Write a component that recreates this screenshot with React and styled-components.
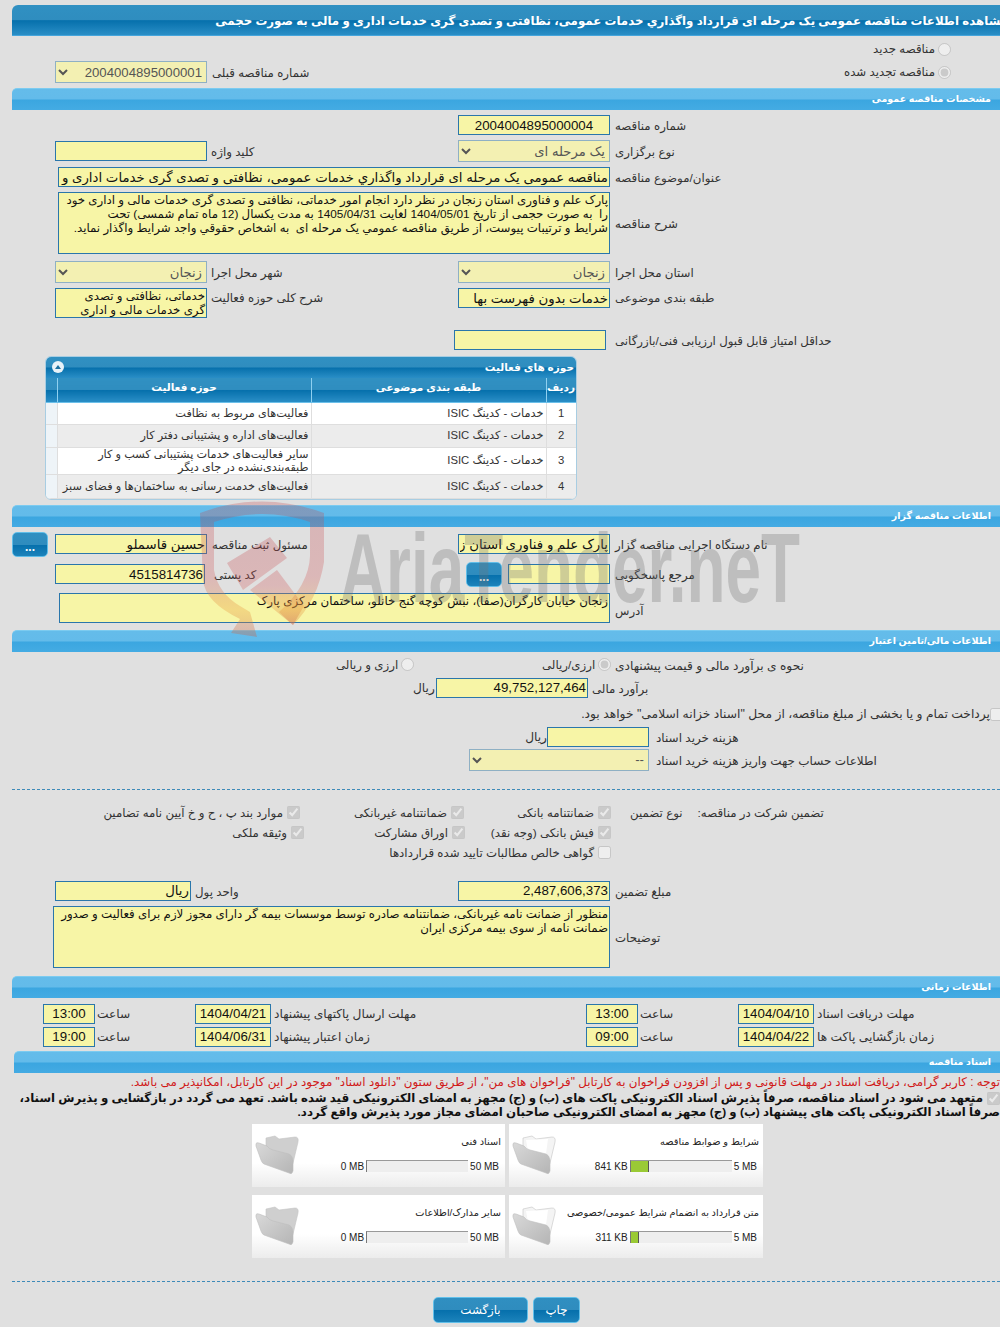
import React from "react";
import styled, { createGlobalStyle } from "styled-components";

const FONT = '"Liberation Sans", "DejaVu Sans", sans-serif';

const GlobalStyle = createGlobalStyle`
  html, body { margin: 0; padding: 0; background: #e0e0e0; }
  body { font-family: ${FONT}; font-size: 11.8px; color: #222; }
`;

const Page = styled.div`
  position: relative;
  width: 1000px;
  height: 1327px;
  overflow: hidden;
  padding-top: 5px;
  box-sizing: border-box;
`;

// Title strip
const TitleBar = styled.div`
  margin-left: 12px;
  margin-right: -8px;
  height: 31px;
  line-height: 32px;
  direction: rtl;
  white-space: nowrap;
  overflow: hidden;
  border-top-left-radius: 6px;
  background: linear-gradient(#3090c2 0, #2f8dbf 50%, #0670ac 52%, #2a8ec6 100%);
  border-bottom: 1px solid #45a5dc;
  box-sizing: border-box;
  color: #fff;
  font-weight: bold;
  font-size: 11.8px;
`;

const SectionBar = styled.div`
  margin-top: ${(p) => p.$mt ?? 5}px;
  margin-left: ${(p) => p.$ml ?? 12}px;
  height: 22px;
  line-height: 20px;
  direction: rtl;
  padding-right: 9px;
  border-top-left-radius: 5px;
  box-sizing: border-box;
  background: linear-gradient(#64bcea 0, #63bbea 48%, #3ba6e0 52%, #44abe3 100%);
  border-top: 1px solid #7ccbf0;
  color: #fff;
  font-weight: bold;
  font-size: 9.5px;
  white-space: nowrap;
`;

// Form rows: [left input][left label][right input][right label]
const FormRow = styled.div`
  display: grid;
  grid-template-columns: 152px 251px 152px 1fr;
  margin-top: ${(p) => p.$mt ?? 5}px;
  padding-left: 55px;
  align-items: center;
`;

const WideRow = styled.div`
  display: flex;
  margin-top: ${(p) => p.$mt ?? 5}px;
  align-items: center;
`;

const Label = styled.label`
  direction: rtl;
  text-align: left;
  font-size: ${(p) => p.$size ?? 11.8}px;
  padding-left: ${(p) => p.$pl ?? 5}px;
  padding-top: 2px;
  white-space: nowrap;
  color: #333;
  align-self: ${(p) => p.$self ?? "center"};
  line-height: ${(p) => (p.$self ? "16px" : "14px")};
`;

const Field = styled.input.attrs({ readOnly: true })`
  direction: rtl;
  display: block;
  width: ${(p) => p.$w ?? 152}px;
  height: 20px;
  margin-left: ${(p) => p.$ml ?? 0}px;
  padding: 0 1px;
  box-sizing: border-box;
  background: #f7f5a6;
  border: 1px solid #2a76ab;
  border-radius: 0;
  outline: none;
  font-family: ${FONT};
  font-size: 13.3px;
  color: #111;
  text-align: ${(p) => p.$align ?? "right"};
`;

const Area = styled.textarea.attrs({ readOnly: true })`
  direction: rtl;
  display: block;
  width: ${(p) => p.$w ?? 152}px;
  height: ${(p) => p.$h}px;
  margin-left: ${(p) => p.$ml ?? 0}px;
  padding: 0 1px;
  box-sizing: border-box;
  background: #f7f5a6;
  border: 1px solid #2a76ab;
  border-radius: 0;
  outline: none;
  resize: none;
  overflow: hidden;
  font-family: ${FONT};
  font-size: 11.8px;
  line-height: 14px;
  color: #111;
`;

const Select = styled.select.attrs({ disabled: true })`
  direction: rtl;
  display: block;
  width: ${(p) => p.$w ?? 152}px;
  height: 22px;
  box-sizing: border-box;
  background: #f3f0b2;
  border: 1px solid #8fb0c4;
  border-radius: 0;
  opacity: 1;
  font-family: ${FONT};
  font-size: 13.2px;
  color: #555;
`;

const DotsButton = styled.button`
  width: 36px;
  height: 25px;
  padding: 6px 0 0;
  border: 1px solid #5fbde8;
  border-radius: 5px;
  background: linear-gradient(#308fc1 0, #2f8cbe 50%, #0670ac 52%, #1c83bb 100%);
  color: #fff;
  font-size: 12px;
  font-weight: bold;
  line-height: 14px;
  font-family: ${FONT};
`;

const Radio = styled.input.attrs({ type: "radio", disabled: true })`
  width: 13px;
  height: 13px;
  margin: 0 0 0 3px;
  flex: none;
`;

const RadioLabel = styled.label`
  direction: rtl;
  display: flex;
  align-items: center;
  font-size: 11.8px;
  line-height: 14px;
  color: #333;
  white-space: nowrap;
`;

const RadioStack = styled.div`
  display: flex;
  direction: rtl;
  padding-right: 49px;
  margin-top: 6px;
  height: 14px;
  align-items: center;
`;

const TopRow = styled.div`
  display: flex;
  justify-content: space-between;
  align-items: center;
  margin-top: 5px;
  padding: 0 49px 0 55px;
`;

const Prev = styled.div`
  display: flex;
  align-items: center;
`;

// Activity panel
const Panel = styled.div`
  margin: 6px 0 0 45px;
  width: 532px;
  border: 1px solid #a8cde2;
  border-radius: 6px;
  overflow: hidden;
  background: #fff;
  box-sizing: border-box;
`;

const PanelTitle = styled.div`
  direction: rtl;
  display: flex;
  justify-content: space-between;
  align-items: center;
  height: 21px;
  padding: 0 2px 2px 6px;
  box-sizing: border-box;
  background: linear-gradient(#3090c2 0, #2f8dbf 48%, #0670ac 52%, #2a8ec6 100%);
  color: #fff;
  font-weight: bold;
  font-size: 10.5px;
`;

const Collapse = styled.span`
  width: 12px;
  height: 12px;
  border-radius: 50%;
  background: #e8f2f8;
  display: flex;
  align-items: center;
  justify-content: center;
  &::before {
    content: "";
    border-left: 3.5px solid transparent;
    border-right: 3.5px solid transparent;
    border-bottom: 4px solid #1b6f9f;
  }
`;

const Table = styled.table`
  direction: rtl;
  width: 100%;
  border-collapse: collapse;
  table-layout: fixed;
  font-size: 11.3px;
`;

const Th = styled.th`
  box-sizing: border-box;
  height: 24px;
  padding: 0 1px 5px;
  background: linear-gradient(#3090c2 0, #2f8dbf 48%, #0670ac 52%, #2a8ec6 100%);
  border-left: 1px solid #8fd0f0;
  border-bottom: 1px solid #6cc0ea;
  color: #fff;
  font-size: 10.5px;
  width: ${(p) => p.$w ?? "auto"};
  &:last-child { border-left: 0; }
`;

const Td = styled.td`
  box-sizing: border-box;
  height: ${(p) => p.$h ?? 22}px;
  padding: 0 2px;
  line-height: 13px;
  text-align: ${(p) => p.$align ?? "right"};
  border-left: 1px solid #dedede;
  border-bottom: 1px solid #dedede;
  color: #333;
  background: ${(p) => (p.$alt ? "#ececec" : "#fff")};
  &:last-child { background: #eef4f8; border-left: 0; padding: 0; }
`;

// Payment rows
const PayRow = styled.div`
  display: flex;
  align-items: center;
  margin-top: ${(p) => p.$mt ?? 4}px;
  padding-left: ${(p) => p.$pl ?? 0}px;
`;

const Cell = styled.div`
  width: ${(p) => p.$w}px;
  flex: none;
  direction: rtl;
  text-align: left;
  font-size: 12.2px;
  line-height: 14px;
  color: #333;
  white-space: nowrap;
  padding-left: ${(p) => p.$pl ?? 0}px;
  box-sizing: border-box;
`;

const Check = styled.input.attrs({ type: "checkbox", disabled: true })`
  width: 13px;
  height: 13px;
  margin: 0 0 0 4px;
  flex: none;
`;

const NoticeCheck = styled(Check)`
  vertical-align: middle;
  margin: ${(p) => p.$margin ?? "0 0 0 4px"};
`;

const Dashed = styled.div`
  margin-top: ${(p) => p.$mt}px;
  margin-left: 12px;
  border-top: 1px dashed #3e8ab8;
`;

const GuaranteeRow = styled.div`
  display: grid;
  grid-template-columns: 204px 161px 146px auto;
  padding-left: 100px;
  margin-top: ${(p) => p.$mt ?? 6}px;
  height: 14px;
  align-items: center;
`;

const CheckCell = styled.label`
  direction: rtl;
  display: flex;
  align-items: center;
  white-space: nowrap;
  font-size: 11.8px;
  color: #333;
  padding-right: ${(p) => p.$pr ?? 0}px;
  grid-column: ${(p) => p.$span ?? "auto"};
`;

const GuaranteeHead = styled.div`
  display: flex;
  gap: 15px;
  padding-left: 19px;
  direction: ltr;
  font-size: 11.8px;
  color: #333;
  white-space: nowrap;
  span { direction: rtl; }
`;

const TimeRow = styled.div`
  display: flex;
  align-items: center;
  padding-left: 43px;
  margin-top: ${(p) => p.$mt ?? 3}px;
`;

const Notice = styled.div`
  direction: rtl;
  white-space: nowrap;
  font-size: ${(p) => p.$size ?? 11.8}px;
  line-height: 14px;
  font-weight: ${(p) => (p.$bold ? "bold" : "normal")};
  color: ${(p) => p.$color ?? "#111"};
  margin-top: ${(p) => p.$mt ?? 0}px;
`;

// Document cards
const CardGrid = styled.div`
  display: grid;
  grid-template-columns: 253px 254px;
  gap: 8px 4px;
  padding-left: 252px;
  margin-top: 5px;
`;

const Card = styled.div`
  height: 63px;
  display: flex;
  box-sizing: border-box;
  padding: 11px 4px 0 3px;
  background: linear-gradient(#fff 0, #fff 62%, #ececec 100%);
`;

const CardBody = styled.div`
  flex: 1;
  direction: rtl;
  color: #222;
  margin-top: -2px;
`;

const CardTitle = styled.div`
  font-size: 9.8px;
  height: 18px;
  line-height: 18px;
  white-space: nowrap;
`;

const Usage = styled.div`
  display: flex;
  direction: ltr;
  justify-content: flex-end;
  align-items: center;
  margin-top: 9px;
  padding-right: 2px;
  font-size: 10px;
  gap: 2px;
`;

const Meter = styled.div`
  width: 102px;
  height: 12px;
  box-sizing: border-box;
  background: #eee;
  border-top: 1px solid #999;
  border-left: 1px solid #777;
  display: flex;
`;

const MeterFill = styled.div`
  height: 100%;
  background: #9aca35;
  border-right: 1px solid #555;
`;

const Actions = styled.div`
  display: flex;
  justify-content: flex-start;
  gap: 5px;
  padding-left: 433px;
  margin-top: 15px;
`;

const ActionButton = styled.button`
  width: ${(p) => p.$w}px;
  height: 26px;
  padding: 0;
  border: 1px solid #62c0ea;
  border-radius: 5px;
  background: linear-gradient(#308fc1 0, #2f8cbe 50%, #0670ac 52%, #1c83bb 100%);
  color: #fff;
  font-family: ${FONT};
  font-size: 11.8px;
`;

// Watermark lying over the form
const Watermark = styled.svg`
  position: absolute;
  left: 0;
  top: 0;
  pointer-events: none;
`;

function Folder({ paper }) {
  return (
    <svg width="46" height="42" viewBox="0 0 46 42" style={{ flex: "none" }}>
      <defs>
        <linearGradient id="fold" x1="0" y1="0" x2="1" y2="1">
          <stop offset="0" stopColor="#d9d9d9" />
          <stop offset="1" stopColor="#b5b5b5" />
        </linearGradient>
      </defs>
      <path d="M11 3 L20 1 L24 4 L40 2 Q44 2 43 7 L38 28 L36 34 L11 20 Z" fill={paper ? "#f4f4f4" : "#cfcfcf"} stroke="#c4c4c4" strokeWidth="0.6" />
      {paper && <path d="M14 5 L36 4 L33 26 L16 16 Z" fill="#fff" />}
      <path d="M1 9 Q1 7 4 8 L12 11 Q14 14 18 15 L34 19 Q37 20 38 25 L38 36 Q37 40 34 38 L9 29 Q7 28 6 25 L1 11 Z" fill="url(#fold)" stroke="#bdbdbd" strokeWidth="0.6" />
    </svg>
  );
}

const activities = [
  { id: 1, text: "فعالیت‌های مربوط به نظافت", h: 22 },
  { id: 2, text: "فعالیت‌های  اداره و پشتیبانی دفتر کار", h: 23 },
  { id: 3, text: "سایر فعالیت‌های خدمات پشتیبانی کسب و کار طبقه‌بندی‌نشده در جای دیگر", h: 27 },
  { id: 4, text: "فعالیت‌های خدمت رسانی به ساختمان‌ها و فضای سبز", h: 24 },
];

const documents = [
  { title: "اسناد فنی", used: "0 MB", max: "50 MB", pct: 0 },
  { title: "شرایط و ضوابط مناقصه", used: "841 KB", max: "5 MB", pct: 17, paper: true },
  { title: "سایر مدارک/اطلاعات", used: "0 MB", max: "50 MB", pct: 0 },
  { title: "متن قرارداد به انضمام شرایط عمومی/خصوصی", used: "311 KB", max: "5 MB", pct: 7, paper: true },
];

const description = `پارک علم و فناوری استان زنجان در نظر دارد انجام امور خدماتی، نظافتی و تصدی گری خدمات مالی و اداری خود
را  به صورت حجمی از تاریخ 1404/05/01 لغایت 1405/04/31 به مدت یکسال (12 ماه تمام شمسی) تحت
شرایط و ترتیبات پیوست، از طریق مناقصه عمومي یک مرحله ای  به اشخاص حقوقي واجد شرایط واگذار نماید.`;

export default function App() {
  return (
    <Page>
      <GlobalStyle />
      <TitleBar>مشاهده اطلاعات مناقصه عمومی یک مرحله ای قرارداد واگذاري خدمات عمومی، نظافتی و تصدی گری خدمات اداری و مالی به صورت حجمی</TitleBar>

      <RadioStack>
        <RadioLabel><Radio />مناقصه جدید</RadioLabel>
      </RadioStack>
      <TopRow>
        <Prev>
          <Select><option>2004004895000001</option></Select>
          <Label>شماره مناقصه قبلی</Label>
        </Prev>
        <RadioLabel><Radio defaultChecked />مناقصه تجدید شده</RadioLabel>
      </TopRow>

      <SectionBar>مشخصات مناقصه عمومی</SectionBar>
      <FormRow $mt={5}>
        <span /><span />
        <Field $align="center" defaultValue="2004004895000004" />
        <Label>شماره مناقصه</Label>
      </FormRow>
      <FormRow>
        <Field />
        <Label $pl={4}>کلید واژه</Label>
        <Select><option>یک مرحله ای</option></Select>
        <Label>نوع برگزاری</Label>
      </FormRow>
      <WideRow>
        <Field $ml={58} $w={552} defaultValue="مناقصه عمومی یک مرحله ای قرارداد واگذاري خدمات عمومی، نظافتی و تصدی گری خدمات اداری و مالی به صورت حجمی" />
        <Label>عنوان/موضوع مناقصه</Label>
      </WideRow>
      <WideRow>
        <Area $ml={58} $w={552} $h={62} defaultValue={description} />
        <Label>شرح مناقصه</Label>
      </WideRow>
      <FormRow $mt={7}>
        <Select><option>زنجان</option></Select>
        <Label $pl={4}>شهر محل اجرا</Label>
        <Select><option>زنجان</option></Select>
        <Label>استان محل اجرا</Label>
      </FormRow>
      <FormRow style={{ alignItems: "start" }}>
        <Area $h={30} defaultValue={"خدماتی، نظافتی و تصدی\nگری خدمات مالی و اداری"} />
        <Label $pl={4} $self="start">شرح کلی حوزه فعالیت</Label>
        <Field defaultValue="خدمات بدون فهرست بها" />
        <Label $self="start">طبقه بندی موضوعی</Label>
      </FormRow>
      <FormRow $mt={12}>
        <span /><span />
        <Field $ml={-4} />
        <Label>حداقل امتیاز قابل قبول ارزیابی فنی/بازرگانی</Label>
      </FormRow>

      <Panel>
        <PanelTitle>حوزه های فعالیت<Collapse /></PanelTitle>
        <Table>
          <thead>
            <tr>
              <Th $w="30px">ردیف</Th>
              <Th $w="235px">طبقه بندی موضوعی</Th>
              <Th $w="254px">حوزه فعالیت</Th>
              <Th />
            </tr>
          </thead>
          <tbody>
            {activities.map((a, i) => (
              <tr key={a.id}>
                <Td $align="center" $alt={i % 2 === 1} $h={a.h}>{a.id}</Td>
                <Td $alt={i % 2 === 1} $h={a.h}>خدمات - کدینگ ISIC</Td>
                <Td $alt={i % 2 === 1} $h={a.h}>{a.text}</Td>
                <Td $h={a.h} />
              </tr>
            ))}
          </tbody>
        </Table>
      </Panel>

      <SectionBar>اطلاعات مناقصه گزار</SectionBar>
      <FormRow style={{ paddingLeft: 12, gridTemplateColumns: "43px 152px 251px 152px 1fr" }} $mt={5}>
        <DotsButton>...</DotsButton>
        <Field defaultValue="حسین قاسملو" />
        <Label>مسئول ثبت مناقصه</Label>
        <Field defaultValue="پارک علم و فناوری استان زنجان" />
        <Label>نام دستگاه اجرایی مناقصه گزار</Label>
      </FormRow>
      <WideRow $mt={5}>
        <Field $ml={55} $w={150} defaultValue="4515814736" />
        <Label $pl={9} style={{ width: 261, boxSizing: "border-box" }}>کد پستی</Label>
        <DotsButton>...</DotsButton>
        <Field $ml={6} $w={102} />
        <Label>مرجع پاسخگویی</Label>
      </WideRow>
      <WideRow $mt={6}>
        <Area $ml={59} $w={551} $h={30} defaultValue="زنجان خیابان کارگران(صفا)، نبش کوچه گنج خانلو، ساختمان مرکزی پارک" />
        <Label style={{ paddingTop: 6 }}>آدرس</Label>
      </WideRow>

      <SectionBar $mt={7}>اطلاعات مالی/تامین اعتبار</SectionBar>
      <PayRow $mt={5} $pl={336} style={{ height: 16 }}>
        <Cell $w={206}><RadioLabel style={{ justifyContent: "flex-end" }}><Radio />ارزی و ریالی</RadioLabel></Cell>
        <Cell $w={73}><RadioLabel style={{ justifyContent: "flex-end" }}><Radio defaultChecked />ارزی/ریالی</RadioLabel></Cell>
        <Label $pl={0} $size={12.2}>نحوه ی برآورد مالی و قیمت پیشنهادی</Label>
      </PayRow>
      <PayRow $mt={5} $pl={413}>
        <Cell $w={23}>ریال</Cell>
        <Field $w={152} defaultValue="49,752,127,464" />
        <Label $pl={4}>برآورد مالی</Label>
      </PayRow>
      <Notice $mt={9} $color="#333" $size={12.3}>
        <NoticeCheck $margin="0 -3px 0 0" />
        پرداخت تمام و یا بخشی از مبلغ مناقصه، از محل "اسناد خزانه اسلامی" خواهد بود.
      </Notice>
      <PayRow $mt={6} $pl={528}>
        <Cell $w={19}>ریال</Cell>
        <Field $w={102} />
        <Label $pl={7} $size={12}>هزینه خرید اسناد</Label>
      </PayRow>
      <PayRow $mt={2} $pl={469}>
        <Select $w={180}><option>--</option></Select>
        <Label $pl={7} $size={12}>اطلاعات حساب جهت واریز هزینه خرید اسناد</Label>
      </PayRow>

      <Dashed $mt={18} />

      <GuaranteeRow $mt={16}>
        <CheckCell $pr={4}><Check defaultChecked />موارد بند پ ، ح و خ آیین نامه تضامین</CheckCell>
        <CheckCell $pr={1}><Check defaultChecked />ضمانتنامه غیربانکی</CheckCell>
        <CheckCell><Check defaultChecked />ضمانتنامه بانکی</CheckCell>
        <GuaranteeHead><span>نوع تضمین</span><span>تضمین شرکت در مناقصه:</span></GuaranteeHead>
      </GuaranteeRow>
      <GuaranteeRow>
        <CheckCell><Check defaultChecked />وثیقه ملکی</CheckCell>
        <CheckCell><Check defaultChecked />اوراق مشارکت</CheckCell>
        <CheckCell><Check defaultChecked />فیش بانکی (وجه نقد)</CheckCell>
      </GuaranteeRow>
      <GuaranteeRow>
        <span />
        <CheckCell $span="2 / 4"><Check />گواهی خالص مطالبات تایید شده قراردادها</CheckCell>
      </GuaranteeRow>

      <WideRow $mt={21}>
        <Field $ml={55} $w={136} defaultValue="ریال" />
        <Label $pl={4} style={{ width: 267, boxSizing: "border-box" }}>واحد پول</Label>
        <Field $w={152} defaultValue="2,487,606,373" />
        <Label>مبلغ تضمین</Label>
      </WideRow>
      <WideRow>
        <Area $ml={53} $w={557} $h={62} defaultValue="منظور از ضمانت نامه غیربانکی، ضمانتنامه صادره توسط موسسات بیمه گر دارای مجوز لازم برای فعالیت و صدور ضمانت نامه از سوی بیمه مرکزی ایران" />
        <Label>توضیحات</Label>
      </WideRow>

      <SectionBar $mt={8}>اطلاعات زمانی</SectionBar>
      <TimeRow $mt={6}>
        <Field $w={52} $align="center" defaultValue="13:00" />
        <Cell $w={100} $pl={2}>ساعت</Cell>
        <Field $w={76} $align="center" defaultValue="1404/04/21" />
        <Cell $w={315} $pl={3}>مهلت ارسال پاکتهای پیشنهاد</Cell>
        <Field $w={52} $align="center" defaultValue="13:00" />
        <Cell $w={100} $pl={2}>ساعت</Cell>
        <Field $w={76} $align="center" defaultValue="1404/04/10" />
        <Cell $w={186} $pl={3}>مهلت دریافت اسناد</Cell>
      </TimeRow>
      <TimeRow>
        <Field $w={52} $align="center" defaultValue="19:00" />
        <Cell $w={100} $pl={2}>ساعت</Cell>
        <Field $w={76} $align="center" defaultValue="1404/06/31" />
        <Cell $w={315} $pl={3}>زمان اعتبار پیشنهاد</Cell>
        <Field $w={52} $align="center" defaultValue="09:00" />
        <Cell $w={100} $pl={2}>ساعت</Cell>
        <Field $w={76} $align="center" defaultValue="1404/04/22" />
        <Cell $w={186} $pl={3}>زمان بازگشایی پاکت ها</Cell>
      </TimeRow>

      <SectionBar $ml={14} $mt={4}>اسناد مناقصه</SectionBar>
      <Notice $color="#d01a1a" $mt={2} $size={11.9}>
        توجه : کاربر گرامی، دریافت اسناد در مهلت قانونی و پس از افزودن فراخوان به کارتابل "فراخوان های من"، از طریق ستون "دانلود اسناد" موجود در این کارتابل، امکانپذیر می باشد.
      </Notice>
      <Notice $bold $mt={2}>
        <NoticeCheck defaultChecked />
        متعهد می شود در اسناد مناقصه، صرفاً پذیرش اسناد الکترونیکی پاکت های (ب) و (ج) مجهز به امضای الکترونیکی قید شده باشد. تعهد می گردد در بازگشایی و پذیرش اسناد،
        <br />
        صرفاً اسناد الکترونیکی پاکت های پیشنهاد (ب) و (ج) مجهز به امضای الکترونیکی صاحبان امضای مجاز مورد پذیرش واقع گردد.
      </Notice>

      <CardGrid>
        {documents.map((d) => (
          <Card key={d.title}>
            <Folder paper={d.paper} />
            <CardBody>
              <CardTitle>{d.title}</CardTitle>
              <Usage>
                <span>{d.used}</span>
                <Meter>{d.pct > 0 && <MeterFill style={{ width: `${d.pct}%` }} />}</Meter>
                <span>{d.max}</span>
              </Usage>
            </CardBody>
          </Card>
        ))}
      </CardGrid>

      <Dashed $mt={23} />

      <Actions>
        <ActionButton $w={95}>بازگشت</ActionButton>
        <ActionButton $w={47}>چاپ</ActionButton>
      </Actions>

      <Watermark width="1000" height="660">
        <defs>
          <linearGradient id="shieldTint" x1="0" y1="0" x2="0" y2="1">
            <stop offset="0" stopColor="#c0474f" stopOpacity="0.28" />
            <stop offset="0.55" stopColor="#d0595a" stopOpacity="0.3" />
            <stop offset="0.8" stopColor="#e89a3c" stopOpacity="0.32" />
            <stop offset="1" stopColor="#c9604a" stopOpacity="0.35" />
          </linearGradient>
        </defs>
        <path d="M200 513 Q262 490 324 513 L324 562 Q318 600 293 625 L279 612 Q309 585 310 556 L310 522 Q262 506 214 522 L214 570 Q218 593 240 606 L250 612 L257 637 L231 633 L240 619 Q205 602 203 580 Z" fill="url(#shieldTint)" />
        <path d="M227 563 L270 537 L287 558 L243 590 Z M250 590 L277 570 L304 606 L293 625 Z" fill="url(#shieldTint)" />
        <text x="340" y="602" textLength="460" lengthAdjust="spacingAndGlyphs" fontFamily='"Liberation Sans", sans-serif' fontWeight="bold" fontSize="98" fill="#6f6f6f" fillOpacity="0.3">AriaTender.neT</text>
      </Watermark>
    </Page>
  );
}
